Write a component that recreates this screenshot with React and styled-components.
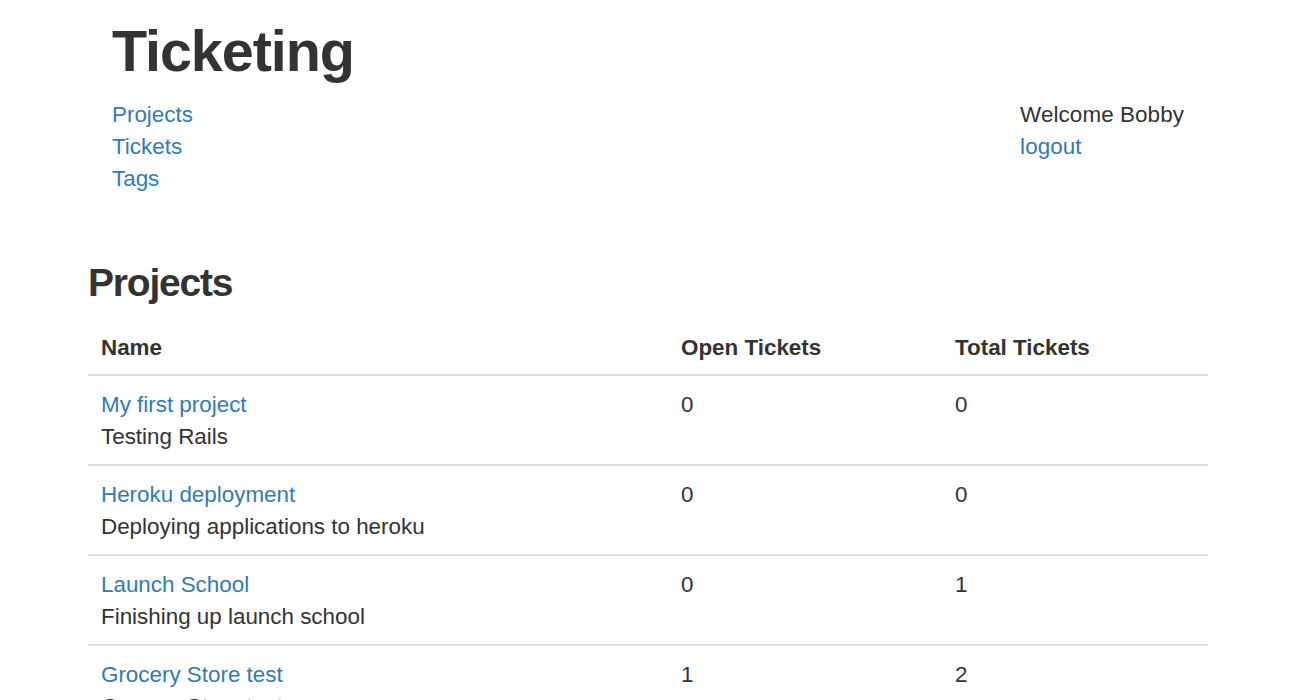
import styled, { createGlobalStyle } from 'styled-components';

const GlobalStyle = createGlobalStyle`
  html, body {
    margin: 0;
    padding: 0;
    background: #fff;
  }
  body {
    font-family: 'Liberation Sans', Arial, Helvetica, sans-serif;
    font-size: 22.4px;
    line-height: 32px;
    color: #333;
  }
`;

const projects = [
  { name: 'My first project', description: 'Testing Rails', open: 0, total: 0 },
  { name: 'Heroku deployment', description: 'Deploying applications to heroku', open: 0, total: 0 },
  { name: 'Launch School', description: 'Finishing up launch school', open: 0, total: 1 },
  { name: 'Grocery Store test', description: 'Grocery Store test', open: 1, total: 2 },
];

const Page = styled.div`
  width: 1120px;
  margin: 0 0 0 88px;
`;

const Header = styled.header`
  display: flex;
  justify-content: space-between;
  align-items: flex-start;
  padding: 0 24px;
`;

const Brand = styled.div`
  display: flex;
  flex-direction: column;
`;

const Title = styled.h1`
  margin: 20px 0 16px;
  font-size: 57.6px;
  line-height: 1.1;
  font-weight: 700;
  letter-spacing: -1.1px;
  color: #333;
`;

const NavList = styled.nav`
  display: flex;
  flex-direction: column;
  align-items: flex-start;
`;

const Link = styled.a`
  color: #337ab7;
  text-decoration: none;
  cursor: pointer;
`;

const UserBox = styled.div`
  display: flex;
  flex-direction: column;
  align-items: flex-start;
  margin-top: 99px;
  letter-spacing: 0.1px;
`;

const SectionTitle = styled.h2`
  margin: 67px 0 13px;
  font-size: 39px;
  line-height: 1.1;
  font-weight: 700;
  letter-spacing: -1.2px;
  color: #333;
`;

const Table = styled.table`
  width: 1120px;
  table-layout: fixed;
  border-collapse: collapse;
  border-spacing: 0;
`;

const Th = styled.th`
  box-sizing: border-box;
  width: ${(p) => p.$width}px;
  text-align: left;
  font-weight: 700;
  padding: 14px 13px 10px;
  border-bottom: 2px solid #ddd;
  vertical-align: bottom;
`;

const Td = styled.td`
  padding: 13px 13px 11px;
  border-top: 2px solid #ddd;
  vertical-align: top;
`;

const Stack = styled.div`
  display: flex;
  flex-direction: column;
  align-items: flex-start;
`;

export default function App() {
  return (
    <>
      <GlobalStyle />
      <Page>
        <Header>
          <Brand>
            <Title>Ticketing</Title>
            <NavList>
              <Link>Projects</Link>
              <Link>Tickets</Link>
              <Link>Tags</Link>
            </NavList>
          </Brand>
          <UserBox>
            <span>Welcome Bobby</span>
            <Link>logout</Link>
          </UserBox>
        </Header>

        <SectionTitle>Projects</SectionTitle>
        <Table>
          <thead>
            <tr>
              <Th $width={580}>Name</Th>
              <Th $width={274}>Open Tickets</Th>
              <Th $width={266}>Total Tickets</Th>
            </tr>
          </thead>
          <tbody>
            {projects.map((project) => (
              <tr key={project.name}>
                <Td>
                  <Stack>
                    <Link>{project.name}</Link>
                    <span>{project.description}</span>
                  </Stack>
                </Td>
                <Td>{project.open}</Td>
                <Td>{project.total}</Td>
              </tr>
            ))}
          </tbody>
        </Table>
      </Page>
    </>
  );
}
